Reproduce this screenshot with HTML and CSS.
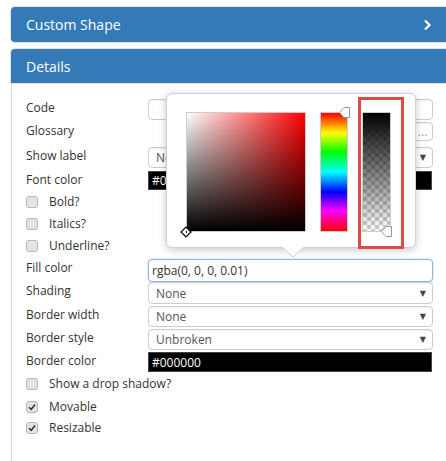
FILE: index.html
```html
<!DOCTYPE html>
<html>
<head>
<meta charset="utf-8">
<link rel="stylesheet" href="styles.css">
</head>
<body>
<div class="page">
  <div class="panel collapsed">
    <div class="panel-heading">
      <span>Custom Shape</span>
      <svg class="chevron" width="9" height="12" viewBox="0 0 9 12"><path d="M2 1.5 L6.5 6 L2 10.5" fill="none" stroke="#fff" stroke-width="2.2"/></svg>
    </div>
  </div>
  <div class="panel">
    <div class="panel-heading"><span>Details</span></div>
    <div class="panel-body">
      <div class="form">
        <label class="lbl">Code</label>
        <div class="ctl"><div class="input h21"></div></div>

        <label class="lbl">Glossary</label>
        <div class="ctl"><div class="input h19 gloss"><span class="dots">...</span></div></div>

        <label class="lbl">Show label</label>
        <div class="ctl"><div class="input select h21"><span>None</span><span class="arrow">▼</span></div></div>

        <label class="lbl">Font color</label>
        <div class="ctl"><div class="swatch h19">#000000</div></div>

        <div class="check"><span class="box"></span>Bold?</div>
        <div class="check"><span class="box"></span>Italics?</div>
        <div class="check"><span class="box"></span>Underline?</div>

        <label class="lbl">Fill color</label>
        <div class="ctl"><div class="input focus h23">rgba(0, 0, 0, 0.01)</div></div>

        <label class="lbl">Shading</label>
        <div class="ctl"><div class="input select h22"><span>None</span><span class="arrow">▼</span></div></div>

        <label class="lbl">Border width</label>
        <div class="ctl"><div class="input select h21"><span>None</span><span class="arrow">▼</span></div></div>

        <label class="lbl">Border style</label>
        <div class="ctl"><div class="input select h21"><span>Unbroken</span><span class="arrow">▼</span></div></div>

        <label class="lbl">Border color</label>
        <div class="ctl"><div class="swatch h20">#000000</div></div>

        <div class="check"><span class="box"></span>Show a drop shadow?</div>
        <div class="check"><span class="box checked"><svg width="8" height="8" viewBox="0 0 8 8"><path d="M1 4.2 L3.2 6.4 L7 1.4" fill="none" stroke="#333" stroke-width="1.6"/></svg></span>Movable</div>
        <div class="check"><span class="box checked"><svg width="8" height="8" viewBox="0 0 8 8"><path d="M1 4.2 L3.2 6.4 L7 1.4" fill="none" stroke="#333" stroke-width="1.6"/></svg></span>Resizable</div>
      </div>
    </div>
  </div>

  <div class="picker">
    <div class="sat">
      <svg class="sat-handle" width="12" height="12" viewBox="0 0 12 12"><path d="M6 1 L11 6 L6 11 L1 6 Z" fill="#fff" stroke="#000" stroke-width="1.2"/><path d="M6 4.5 L7.5 6 L6 7.5 Z" fill="#000"/></svg>
    </div>
    <div class="hue">
      <svg class="bar-handle hue-handle" width="11" height="11" viewBox="0 0 11 11"><path d="M0.5 5.5 L5 0.5 L10.5 0.5 L10.5 10.5 L5 10.5 Z" fill="#fff" stroke="#999" stroke-width="1"/></svg>
    </div>
    <div class="alpha">
      <div class="alpha-grad"></div>
      <svg class="bar-handle alpha-handle" width="11" height="11" viewBox="0 0 11 11"><path d="M0.5 5.5 L5 0.5 L10.5 0.5 L10.5 10.5 L5 10.5 Z" fill="#fff" stroke="#999" stroke-width="1"/></svg>
    </div>
    <div class="highlight"></div>
    <svg class="pointer" width="22" height="11" viewBox="0 0 22 11"><path d="M0 0 L11 10 L22 0" fill="#fff" stroke="#c8c8c8" stroke-width="1"/><path d="M1 -1 L21 -1" stroke="#fff" stroke-width="3"/></svg>
  </div>
</div>
</body>
</html>
```
FILE: styles.css
```css
html, body {
  margin: 0;
  padding: 0;
  overflow: hidden;
  background: #fff;
}
body {
  font-family: "Open Sans", "DejaVu Sans", sans-serif;
  color: #333;
  font-size: 12px;
}
.page {
  position: relative;
  padding: 7px 0 0 11px;
  width: 446px;
  height: 461px;
  box-sizing: border-box;
  overflow: hidden;
}
.panel {
  width: 450px;
  margin-bottom: 7px;
}
.panel-heading {
  background: #337ab7;
  color: #fff;
  font-size: 14px;
  height: 34px;
  display: flex;
  align-items: center;
  justify-content: space-between;
  padding: 0 0 0 15px;
  border-radius: 4px 0 0 0;
  box-shadow: 0 0 0 1px #dfe3e8;
}
.collapsed .panel-heading {
  height: 35px;
  border-radius: 4px 0 0 4px;
  padding-right: 29px;
}
.chevron {
  margin-top: 1px;
}
.panel-body {
  border-left: 1px solid #ddd;
  padding: 16px 0 0 14px;
  height: 370px;
}
.form {
  display: grid;
  grid-template-columns: 122px 285px;
  grid-template-rows: 23px 25px 24px 22px 22px 22px 22px 23px 24px 23px 23px 23px 23px 21px 18px;
}
.lbl {
  line-height: 17px;
  white-space: nowrap;
}
.ctl {
  display: flex;
  align-items: flex-start;
}
.input {
  flex: 1;
  box-sizing: border-box;
  border: 1px solid #ccc;
  border-radius: 4px;
  background: #fff;
  display: flex;
  align-items: center;
  padding: 0 6px 0 3px;
  color: #333;
  box-shadow: inset 0 1px 1px rgba(0,0,0,0.05);
}
.h19 { height: 19px; }
.h20 { height: 20px; }
.h21 { height: 21px; }
.h22 { height: 22px; }
.h23 { height: 23px; }
.gloss {
  margin-left: 30px;
  justify-content: flex-end;
  padding-right: 4px;
}
.dots {
  color: #5b8bc4;
  font-size: 11px;
  line-height: 8px;
  letter-spacing: 0.5px;
}
.select {
  justify-content: space-between;
  padding-left: 7px;
  color: #555;
}
.arrow {
  font-size: 8px;
  color: #444;
  font-family: "DejaVu Sans", sans-serif;
}
.focus {
  border-color: #8fb4e3;
  box-shadow: 0 0 2px rgba(102,175,233,0.6);
}
.swatch {
  flex: 1;
  margin-right: 1px;
  background: #000;
  color: #fff;
  box-sizing: border-box;
  padding-left: 3px;
  display: flex;
  align-items: center;
  border: 1px solid #444;
  font-size: 12px;
}
.check {
  grid-column: 1 / 3;
  display: flex;
  align-items: center;
  height: 18px;
  line-height: 18px;
}
.box {
  box-sizing: border-box;
  width: 12px;
  height: 12px;
  border: 1px solid #b5b5b5;
  border-radius: 3px;
  background: #e4e4e4;
  margin-right: 11px;
  display: flex;
  align-items: center;
  justify-content: center;
}
.box svg { display: block; }

/* colour picker popup */
.picker {
  position: absolute;
  left: 166px;
  top: 93px;
  width: 250px;
  height: 155px;
  box-sizing: border-box;
  background: #fff;
  border: 1px solid #cfcfcf;
  border-radius: 6px;
  box-shadow: 0 2px 8px rgba(0,0,0,0.22);
  display: flex;
  align-items: flex-start;
  padding: 18px 0 0 19px;
  gap: 14px;
}
.sat {
  position: relative;
  width: 120px;
  height: 120px;
  box-sizing: border-box;
  border: 1px solid #ccc;
  background:
    linear-gradient(to bottom, rgba(0,0,0,0), #000),
    linear-gradient(to right, #fff, #f00);
}
.sat-handle {
  position: absolute;
  left: -7px;
  bottom: -7px;
}
.hue {
  position: relative;
  width: 28px;
  height: 120px;
  box-sizing: border-box;
  border: 1px solid #ccc;
  background: linear-gradient(to bottom, #f00 0%, #ff0 17%, #0f0 33%, #0ff 50%, #00f 67%, #f0f 83%, #f00 100%);
}
.alpha {
  position: relative;
  width: 29px;
  height: 120px;
  box-sizing: border-box;
  border: 1px solid #ccc;
  background-color: #fff;
  background-image:
    linear-gradient(45deg, #ccc 25%, transparent 25%, transparent 75%, #ccc 75%),
    linear-gradient(45deg, #ccc 25%, transparent 25%, transparent 75%, #ccc 75%);
  background-size: 8px 8px;
  background-position: 0 0, 4px 4px;
}
.alpha-grad {
  position: absolute;
  inset: 0;
  background: linear-gradient(to bottom, #000, rgba(0,0,0,0));
}
.bar-handle {
  position: absolute;
}
.hue-handle {
  right: -3px;
  top: -6px;
}
.alpha-handle {
  right: -2px;
  bottom: -6px;
}
.highlight {
  position: absolute;
  left: 191px;
  top: 3px;
  width: 46px;
  height: 152px;
  box-sizing: border-box;
  border: 3px solid #e04a45;
}
.pointer {
  position: absolute;
  left: 115px;
  top: 153px;
}
```
